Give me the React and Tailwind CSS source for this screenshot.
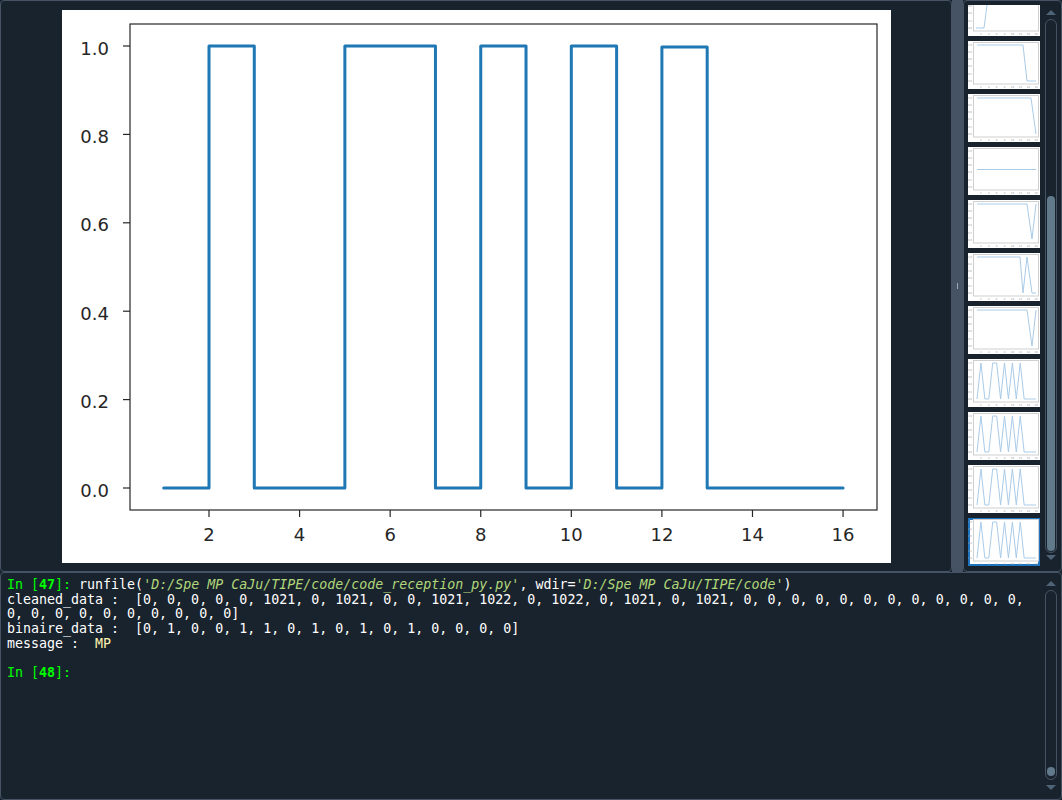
const BORDER = "#455364";

// main plot geometry (figure coordinates, 829x553)
const VALUES = [0, 1, 0, 0, 1, 1, 0, 1, 0, 1, 0, 0.998, 0, 0, 0, 0];
const px = (x) => 147 + (x - 2) * 45.29;
const py = (v) => 478 - 442 * v;

function stepPath(vals) {
  let d = `M${px(1)} ${py(vals[0])}`;
  for (let i = 1; i < vals.length; i++) {
    d += ` L${px(i + 1)} ${py(vals[i - 1])} L${px(i + 1)} ${py(vals[i])}`;
  }
  return d;
}

function MainPlot() {
  const yTicks = [0, 0.2, 0.4, 0.6, 0.8, 1.0];
  const xTicks = [2, 4, 6, 8, 10, 12, 14, 16];
  return (
    <svg width="829" height="553" viewBox="0 0 829 553" className="block">
      <rect x="68" y="14" width="747" height="486" fill="none" stroke="#262626" strokeWidth="1.2" />
      {yTicks.map((t) => (
        <g key={t}>
          <line x1="61" x2="68" y1={py(t)} y2={py(t)} stroke="#262626" strokeWidth="1.2" />
          <text
            x="47"
            y={py(t) + 8.5}
            textAnchor="end"
            fontFamily="'DejaVu Sans', sans-serif"
            fontSize="18"
            fill="#262626"
          >
            {t.toFixed(1)}
          </text>
        </g>
      ))}
      {xTicks.map((t) => (
        <g key={t}>
          <line x1={px(t)} x2={px(t)} y1="500" y2="507" stroke="#262626" strokeWidth="1.2" />
          <text
            x={px(t)}
            y="531"
            textAnchor="middle"
            fontFamily="'DejaVu Sans', sans-serif"
            fontSize="18"
            fill="#262626"
          >
            {t}
          </text>
        </g>
      ))}
      <path d={stepPath(VALUES)} fill="none" stroke="#1f77b4" strokeWidth="3" strokeLinejoin="round" strokeLinecap="round" />
    </svg>
  );
}

// thumbnails: points in 72x48 space
const osc = VALUES.map((v, i) => `${9 + i * 3.93},${40 - Math.round(v) * 36}`).join(" ");
const THUMBS = [
  "8,40 16,40 21,2 30,-20",
  "9,4 55,4 59,40 68,40",
  "9,4 63,4 68,40",
  "9,22.5 68,22.5",
  "9,4 59,4 64,39 68,4",
  "9,4 52,4 55,40 59,4 64,40 68,40",
  "9,4 59,4 64,40 68,4",
  osc,
  osc,
  osc,
  osc,
];

function Thumb({ points, selected, className = "" }) {
  return (
    <div
      className={`relative h-[48px] w-[72px] shrink-0 bg-white ${selected ? "border-2 border-[#1f74bf]" : ""} ${className}`}
    >
      <svg
        width="72"
        height="48"
        viewBox="0 0 72 48"
        className={`block ${selected ? "-m-[2px]" : ""}`}
      >
        <rect x="5.5" y="1.5" width="65" height="41.5" fill="none" stroke="#cfcfcf" strokeWidth="1" />
        {[0, 1, 2, 3, 4, 5].map((i) => (
          <text key={"y" + i} x="4" y={41 - i * 7.3} textAnchor="end" fontSize="2.6" fill="#9a9a9a" fontFamily="'DejaVu Sans', sans-serif">
            {(i * 0.2).toFixed(1)}
          </text>
        ))}
        {[2, 4, 6, 8, 10, 12, 14, 16].map((t, i) => (
          <text key={"x" + i} x={12.9 + i * 7.9} y="47" textAnchor="middle" fontSize="2.6" fill="#9a9a9a" fontFamily="'DejaVu Sans', sans-serif">
            {t}
          </text>
        ))}
        <polyline points={points} fill="none" stroke="#a9cbe8" strokeWidth="1" />
      </svg>
    </div>
  );
}

function Arrow({ up }) {
  return (
    <svg width="10" height="5" viewBox="0 0 10 5" className="block shrink-0">
      <polygon points={up ? "0,5 5,0 10,5" : "0,0 5,5 10,0"} fill="#4f6476" />
    </svg>
  );
}

export default function App() {
  const str = "text-[#b0d67a] italic";
  return (
    <div className="flex h-[800px] w-[1062px] flex-col overflow-hidden bg-[#19232d]">
      <div className="flex h-[572px] shrink-0">
        <div className="flex h-full w-[952px] items-center justify-center rounded-[4px] border border-[#455364]">
          <div className="h-[553px] w-[829px] bg-white">
            <MainPlot />
          </div>
        </div>

        <div className="flex w-[11px] items-center justify-center bg-[#455364]">
          <div className="h-[6px] w-px bg-[#9daab6]" />
        </div>

        <div className="flex w-[99px] rounded-[4px] border border-[#455364]">
          <div className="flex w-[76px] flex-col pl-[4px] pt-[4px]">
            <div className="flex flex-1 flex-col gap-[5px] overflow-hidden">
              {THUMBS.map((p, i) => (
                <Thumb key={i} points={p} selected={i === THUMBS.length - 1} className={i === 0 ? "-mt-[17px]" : ""} />
              ))}
            </div>
          </div>
          <div className="ml-[5px] flex w-[12px] flex-col items-center pb-[11px] pt-[9px]">
            <Arrow up />
            <div className="mt-[4px] flex w-[12px] flex-1 flex-col rounded-[6px] border border-[#455364] p-px">
              <div className="h-[175px] shrink-0" />
              <div className="flex-1 rounded-[5px] bg-[#60798b]" />
            </div>
            <div className="mt-[2px]">
              <Arrow />
            </div>
          </div>
        </div>
      </div>

      <div className="flex min-h-0 flex-1 rounded-[4px] border border-[#455364]">
        <div className="flex-1 whitespace-pre pl-[6px] pt-[5px] font-['DejaVu_Sans_Mono',monospace] text-[13.3px] leading-[14.7px] text-white">
          <div>
            <span className="text-[#00ff00]">In [</span>
            <span className="font-bold text-[#00ff00]">47</span>
            <span className="text-[#00ff00]">]: </span>
            runfile(<span className={str}>'D:/Spe MP CaJu/TIPE/code/code_reception_py.py'</span>, wdir=
            <span className={str}>'D:/Spe MP CaJu/TIPE/code'</span>)
          </div>
          <div>cleaned_data :  [0, 0, 0, 0, 0, 1021, 0, 1021, 0, 0, 1021, 1022, 0, 1022, 0, 1021, 0, 1021, 0, 0, 0, 0, 0, 0, 0, 0, 0, 0, 0, 0,</div>
          <div>0, 0, 0, 0, 0, 0, 0, 0, 0, 0]</div>
          <div>binaire_data :  [0, 1, 0, 0, 1, 1, 0, 1, 0, 1, 0, 1, 0, 0, 0, 0]</div>
          <div>
            message :  <span className="text-[#fff2b0]">MP</span>
          </div>
          <div> </div>
          <div>
            <span className="text-[#00ff00]">In [</span>
            <span className="font-bold text-[#00ff00]">48</span>
            <span className="text-[#00ff00]">]: </span>
          </div>
        </div>
        <div className="mr-[4px] flex w-[12px] flex-col items-center pb-[9px] pt-[8px]">
          <Arrow up />
          <div className="mt-[4px] flex w-[12px] flex-1 flex-col justify-end rounded-[6px] border border-[#455364] px-px pb-[3px]">
            <div className="h-[9px] rounded-full bg-[#60798b]" />
          </div>
          <div className="mt-[5px]">
            <Arrow />
          </div>
        </div>
      </div>
    </div>
  );
}
